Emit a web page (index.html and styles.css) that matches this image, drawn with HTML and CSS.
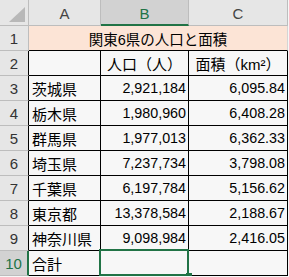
FILE: index.html
```html
<!DOCTYPE html>
<html lang="ja">
<head>
<meta charset="utf-8">
<link rel="stylesheet" href="styles.css">
</head>
<body>
<div class="sheet">
  <div class="corner"><svg width="28" height="25" viewBox="0 0 28 25"><polygon points="25,7 25,22 9,22" fill="#b8b8b8"/></svg></div>
  <div class="colh">A</div>
  <div class="colh sel">B</div>
  <div class="colh">C</div>

  <div class="rowh">1</div>
  <div class="title">関東6県の人口と面積</div>

  <div class="rowh t">2</div>
  <div class="cell"></div>
  <div class="cell head">人口（人）</div>
  <div class="cell head">面積（km²）</div>

  <div class="rowh t">3</div>
  <div class="cell name">茨城県</div>
  <div class="cell num">2,921,184</div>
  <div class="cell num">6,095.84</div>

  <div class="rowh t">4</div>
  <div class="cell name">栃木県</div>
  <div class="cell num">1,980,960</div>
  <div class="cell num">6,408.28</div>

  <div class="rowh t">5</div>
  <div class="cell name">群馬県</div>
  <div class="cell num">1,977,013</div>
  <div class="cell num">6,362.33</div>

  <div class="rowh t">6</div>
  <div class="cell name">埼玉県</div>
  <div class="cell num">7,237,734</div>
  <div class="cell num">3,798.08</div>

  <div class="rowh t">7</div>
  <div class="cell name">千葉県</div>
  <div class="cell num">6,197,784</div>
  <div class="cell num">5,156.62</div>

  <div class="rowh t">8</div>
  <div class="cell name">東京都</div>
  <div class="cell num">13,378,584</div>
  <div class="cell num">2,188.67</div>

  <div class="rowh t">9</div>
  <div class="cell name">神奈川県</div>
  <div class="cell num">9,098,984</div>
  <div class="cell num">2,416.05</div>

  <div class="rowh t selrow">10</div>
  <div class="cell name">合計</div>
  <div class="cell active"></div>
  <div class="cell"></div>
</div>
</body>
</html>
```
FILE: styles.css
```css
html, body {
  margin: 0;
  padding: 0;
  background: #f7f7f7;
}
body {
  font-family: "Liberation Sans", "Noto Sans CJK JP", sans-serif;
  color: #000;
  overflow: hidden;
}
.sheet {
  display: grid;
  grid-template-columns: 29px 72px 88px 99px;
  grid-template-rows: 26px;
  grid-auto-rows: 25px;
  width: 288px;
}
.sheet > div {
  box-sizing: border-box;
  border-right: 1px solid #000;
  border-bottom: 1px solid #000;
  display: flex;
  align-items: center;
  overflow: visible;
  white-space: nowrap;
}
.corner {
  background: #e6e6e6;
  border-color: #bdbdbd !important;
}
.corner svg { display: block; }
.colh {
  background: #e6e6e6;
  border-color: #bdbdbd !important;
  justify-content: center;
  font-size: 15px;
  color: #444;
  padding-top: 2px;
}
.colh.sel {
  background: #d2d2d2;
  color: #217346;
  border-bottom: 2px solid #217346 !important;
  padding-top: 3px;
}
.rowh {
  background: #e6e6e6;
  border-right-color: #bdbdbd !important;
  border-bottom-color: #bdbdbd !important;
  justify-content: center;
  font-size: 15px;
  color: #333;
}
.rowh.t {
  border-right-color: #000 !important;
}
.rowh.selrow {
  background: #d2d2d2;
  color: #217346;
  border-right: 2px solid #217346 !important;
}
.title {
  grid-column: span 3;
  background: #fce4d6;
  border-right-color: #d4d4d4 !important;
  justify-content: center;
  font-size: 14.5px;
}
.cell {
  background: #f7f7f7;
  font-size: 15px;
}
.cell.head {
  justify-content: center;
}
.cell.name {
  padding-left: 3px;
}
.cell.num {
  justify-content: flex-end;
  padding-right: 2px;
  font-size: 14.3px;
}
.cell.active {
  position: relative;
}
.cell.active::after {
  content: "";
  position: absolute;
  left: -2px;
  top: -2px;
  right: -1px;
  bottom: -1px;
  border: 2px solid #217346;
}
.cell.active::before {
  content: "";
  position: absolute;
  right: -4px;
  bottom: -4px;
  width: 6px;
  height: 6px;
  background: #217346;
  z-index: 2;
}
```
